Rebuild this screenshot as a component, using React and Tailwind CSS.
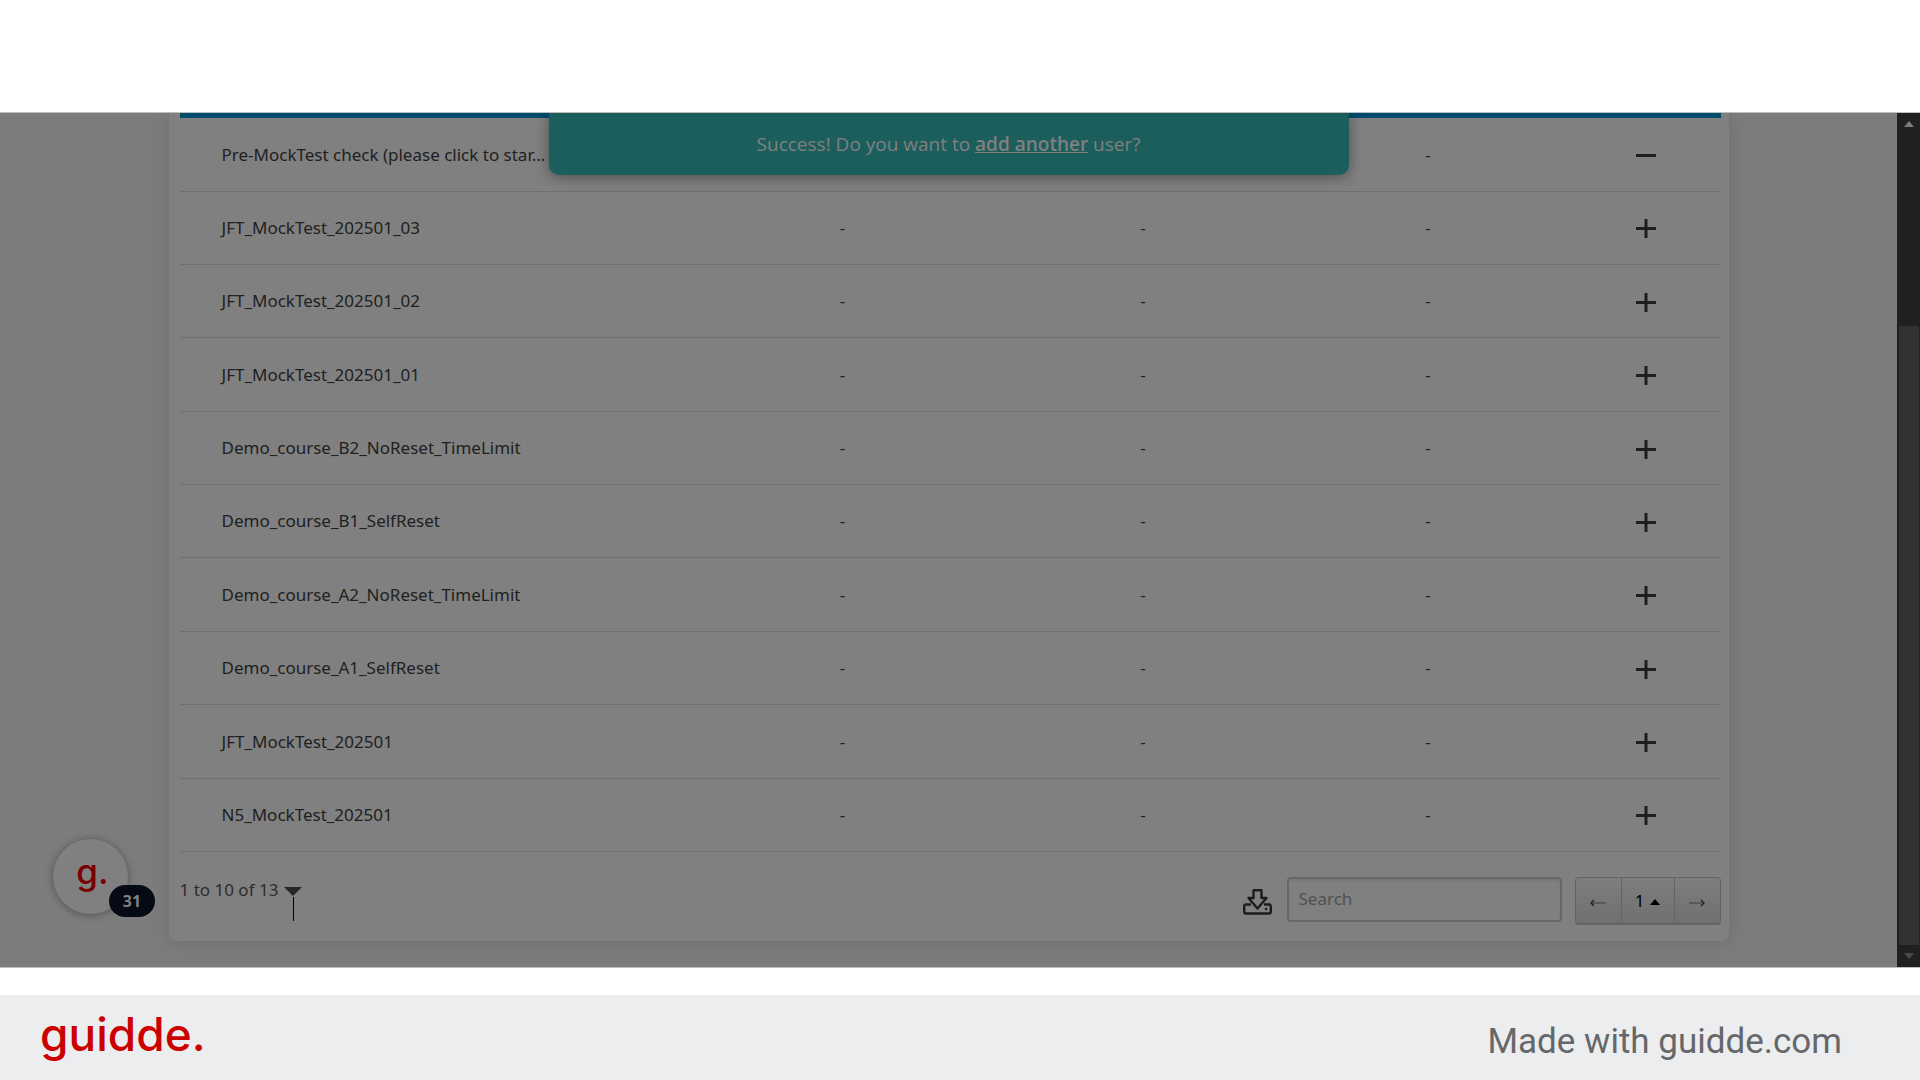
import React, { useState } from 'react';

const COURSES = [
  { name: 'Pre-MockTest check (please click to star...', enrolled: true, cells: ['', '', '-'] },
  { name: 'JFT_MockTest_202501_03', cells: ['-', '-', '-'] },
  { name: 'JFT_MockTest_202501_02', cells: ['-', '-', '-'] },
  { name: 'JFT_MockTest_202501_01', cells: ['-', '-', '-'] },
  { name: 'Demo_course_B2_NoReset_TimeLimit', cells: ['-', '-', '-'] },
  { name: 'Demo_course_B1_SelfReset', cells: ['-', '-', '-'] },
  { name: 'Demo_course_A2_NoReset_TimeLimit', cells: ['-', '-', '-'] },
  { name: 'Demo_course_A1_SelfReset', cells: ['-', '-', '-'] },
  { name: 'JFT_MockTest_202501', cells: ['-', '-', '-'] },
  { name: 'N5_MockTest_202501', cells: ['-', '-', '-'] }
];

function ToggleIcon({ minus }) {
  return (
    <svg width="20" height="20" viewBox="0 0 20 20" stroke="#1e1e1e" strokeWidth="3" aria-hidden="true">
      <path d="M0 9.500H20" />
      {!minus && <path d="M10 0V19" />}
    </svg>
  );
}

function ExportIcon() {
  return (
    <svg width="29" height="26" viewBox="0 0 29 26" fill="none" stroke="#1c1c1c" strokeWidth="2.400" strokeLinejoin="round" aria-hidden="true">
      <path d="M8 15.500H3Q1.200 15.500 1.200 17.300V22.700Q1.200 24.500 3 24.500H26Q27.800 24.500 27.800 22.700V17.300Q27.800 15.500 26 15.500H21" />
      <path d="M10.500 1.200H18.500V9H23.500L14.500 19.500L5.500 9H10.500Z" />
      <circle cx="23" cy="20" r="1.300" fill="#1c1c1c" stroke="none" />
    </svg>
  );
}

function Arrow({ right }) {
  return (
    <svg width="16" height="8" viewBox="0 0 16 8" fill="none" aria-hidden="true" className={right ? 'rotate-180' : ''}>
      <path d="M1 4H16" stroke="#3f3f3f" strokeWidth="1" />
      <path d="M4 1L1 4L4 7" stroke="#262626" strokeWidth="1.500" />
    </svg>
  );
}

function Banner() {
  return (
    <div className="absolute top-0 left-1/2 -translate-x-1/2 w-[800px] h-[62px] flex items-center justify-center rounded-b-[10px] bg-[#1c5e5c] shadow-[0_2px_14px_rgba(0,0,0,0.4)] font-['Open_Sans',sans-serif] text-[19px] text-[#808080]">
      <p>
        Success! Do you want to <a href="#add" className="font-semibold underline">add another</a> user?
      </p>
    </div>
  );
}

function CourseTable() {
  return (
    <div className="pt-px border-t-[5px] border-[#004c6d]">
      <table className="w-full h-[733px] table-fixed text-[17px]">
        <colgroup>
          <col />
          <col className="w-[20.5%]" />
          <col className="w-[18.5%]" />
          <col className="w-[18.5%]" />
          <col className="w-[150px]" />
        </colgroup>
        <tbody>
          {COURSES.map(course => (
            <tr key={course.name} className="border-b border-[#707070]">
              <td className="pl-[42px] whitespace-nowrap">{course.name}</td>
              {course.cells.map((cell, i) => (
                <td key={i} className="text-center">{cell}</td>
              ))}
              <td className="text-center">
                <button className="align-middle" aria-label={course.enrolled ? 'Remove' : 'Enroll'}>
                  <ToggleIcon minus={course.enrolled} />
                </button>
              </td>
            </tr>
          ))}
        </tbody>
      </table>
    </div>
  );
}

function TableFooter() {
  const [query, setQuery] = useState('');

  return (
    <div className="flex items-start pt-[25px] pb-4">
      <button className="relative flex items-center gap-1.5 h-[26px] text-[17px] text-[#2c2c2c]">
        1 to 10 of 13
        <svg width="18" height="9" viewBox="0 0 18 9" className="mt-0.5" aria-hidden="true">
          <path d="M0 0H18L9 9Z" fill="#262626" />
        </svg>
        {/* text cursor resting under the arrow */}
        <span className="absolute right-2 top-5 w-px h-6 bg-black" />
      </button>
      <div className="ml-auto flex items-start">
        <button className="mt-3 mr-[15px]" aria-label="Export">
          <ExportIcon />
        </button>
        <input
          type="text"
          aria-label="Search"
          placeholder="Search"
          value={query}
          onChange={e => setQuery(e.target.value)}
          className="w-[275px] h-[45px] mr-[13px] px-2.5 pb-0.5 rounded border-2 border-[#676767] bg-[#808080] text-[17px] placeholder:text-[#505050] outline-none shadow-[inset_0_2px_2px_rgba(0,0,0,0.08)]"
        />
        <div className="flex h-12 rounded border border-b-2 border-[#646464] bg-linear-to-b from-[#7e7e7e] to-[#707070] text-[#111]">
          <button className="w-[45px] flex items-center justify-center pt-1" aria-label="Previous page">
            <Arrow />
          </button>
          <button className="w-[54px] flex items-center justify-center gap-1.5 border-x border-[#646464] text-[17px] text-black">
            1
            <svg width="10" height="6" viewBox="0 0 10 6" className="mt-0.5" aria-hidden="true">
              <path d="M5 0L10 6H0Z" />
            </svg>
          </button>
          <button className="w-[45px] flex items-center justify-center pt-1" aria-label="Next page">
            <Arrow right />
          </button>
        </div>
      </div>
    </div>
  );
}

function ScrollTrack() {
  return (
    <div className="w-[23px] shrink-0 flex flex-col items-center bg-[#202020]">
      <svg width="10" height="6" viewBox="0 0 10 6" className="mt-2" aria-hidden="true">
        <path d="M5 0L10 6H0Z" fill="#7c7c7c" />
      </svg>
      <div className="mt-[199px] w-5 flex-1 bg-[#323232]" />
      <svg width="10" height="6" viewBox="0 0 10 6" className="mt-2 mb-2" aria-hidden="true">
        <path d="M0 0H10L5 6Z" fill="#4a4a4a" />
      </svg>
    </div>
  );
}

function GuiddeBubble() {
  return (
    <button className="absolute left-[53px] bottom-[53px] size-[75px] rounded-full bg-[#808080] shadow-[0_1px_8px_rgba(0,0,0,0.35)]" aria-label="31 guides">
      <span className="block pb-3 pl-1 font-['Inter',sans-serif] font-medium text-[35px] leading-[60px] text-[#780000]">g.</span>
      <span className="absolute left-14 bottom-[-3px] w-[46px] h-8 flex items-center justify-center rounded-full bg-[#060a15] font-['Noto_Sans',sans-serif] text-base font-bold text-[#808080]">
        31
      </span>
    </button>
  );
}

export default function App() {
  return (
    <div className="min-h-screen flex flex-col bg-white">
      <main className="relative mt-28 flex border-y border-[#bdbdbd] bg-[#7c7c7c] font-['Noto_Sans',sans-serif] text-[#202020]">
        <div className="relative flex-1 overflow-hidden pb-[26px]">
          <div className="max-w-[1560px] mx-auto pl-[11px] pr-2 rounded-b-lg bg-[#808080] shadow-[0_2px_18px_rgba(0,0,0,0.12)]">
            <CourseTable />
            <TableFooter />
          </div>
          <Banner />
          <GuiddeBubble />
        </div>
        <ScrollTrack />
      </main>
      <footer className="mt-auto h-[85px] pl-10 pr-[78px] flex items-center justify-between bg-[#ecedef]">
        <a href="#home" className="pb-2 font-['Inter',sans-serif] font-medium text-[46px] leading-none text-[#cc0000]">guidde.</a>
        <p className="pt-2 font-['Roboto',sans-serif] text-[35px] leading-none text-[#666769]">Made with guidde.com</p>
      </footer>
    </div>
  );
}
